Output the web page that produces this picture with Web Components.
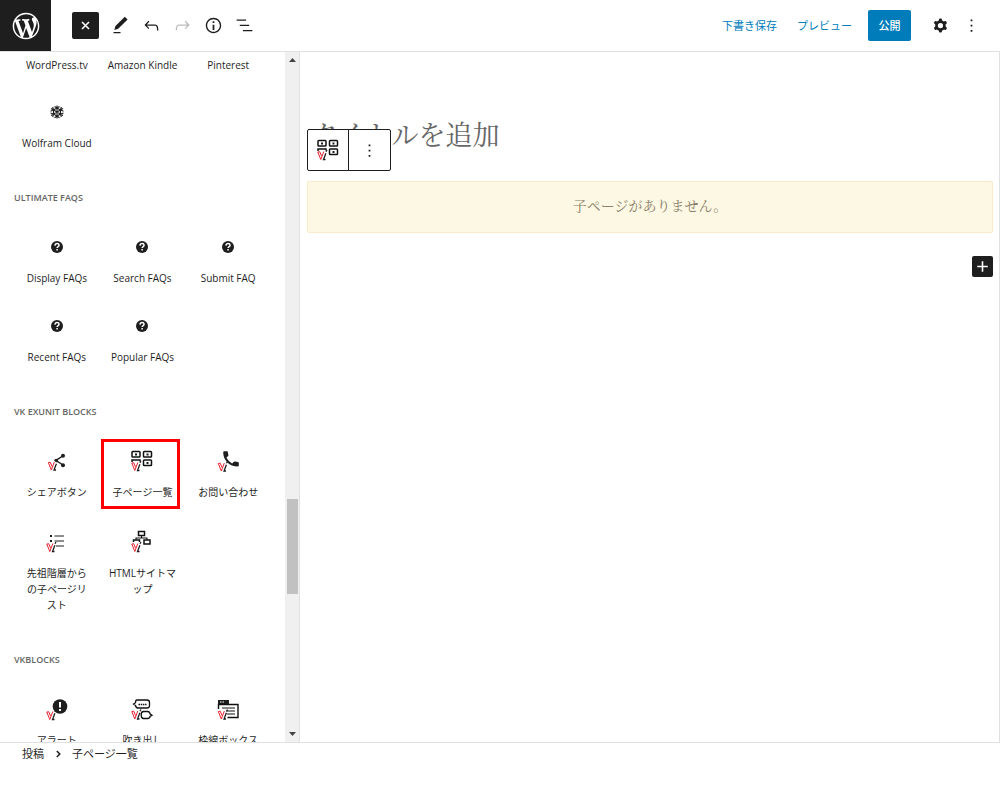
<!DOCTYPE html>
<html lang="ja">
<head>
<meta charset="utf-8">
<meta name="viewport" content="width=device-width, initial-scale=1">
<title>投稿の編集</title>
<style>
  body { margin: 0; background: #fff; color: #1e1e1e; font: 10px/16px "Open Sans", "Noto Sans CJK JP", sans-serif; }
</style>
</head>
<body>
<post-editor></post-editor>

<script>
const MARK = `<g fill="none" stroke-width="1"><path stroke="#e8202c" d="M.3 2L3.300 9.500L6.300 1.500M2.300 1.800L4 6M.3 2l2-.3"/><path stroke="#1e1e1e" stroke-width="1.300" d="M9.500 0L8.500 1.800M8.400 3.300L6 9.500h2"/></g>`;
const mark = (x, y) => `<g transform="translate(${x} ${y})">${MARK}</g>`;

const ICONS = {
  wordpress: ['-2 -2 24 24', `<path d="M20 10c0-5.51-4.49-10-10-10C4.48 0 0 4.49 0 10c0 5.52 4.48 10 10 10 5.51 0 10-4.48 10-10zM7.78 15.37L4.37 6.22c.55-.02 1.17-.08 1.17-.08.5-.06.44-1.13-.06-1.11 0 0-1.45.11-2.37.11-.18 0-.37 0-.58-.01C4.12 2.69 6.87 1.11 10 1.11c2.33 0 4.45.87 6.05 2.34-.68-.11-1.65.39-1.65 1.58 0 .74.45 1.36.9 2.1.35.61.55 1.36.55 2.46 0 1.49-1.4 5-1.4 5l-3.03-8.37c.54-.02.82-.17.82-.17.5-.05.44-1.25-.06-1.22 0 0-1.44.12-2.38.12-.87 0-2.33-.12-2.33-.12-.5-.03-.56 1.2-.06 1.22l.92.08 1.26 3.41zM17.41 10c.24-.64.74-1.87.43-4.25.7 1.29 1.05 2.71 1.05 4.25 0 3.29-1.73 6.24-4.4 7.78.97-2.59 1.94-5.2 2.92-7.78zM6.1 18.09C3.12 16.65 1.11 13.53 1.11 10c0-1.3.23-2.48.72-3.59C3.25 10.3 4.67 14.2 6.1 18.09zm4.03-6.63l2.58 6.98c-.86.29-1.76.45-2.71.45-.79 0-1.57-.11-2.29-.33.81-2.38 1.62-4.74 2.42-7.1z"/>`],
  close: ['0 0 24 24', `<path d="M8 8l8 8M16 8l-8 8" stroke="currentColor" stroke-width="1.8"/>`],
  plus: ['0 0 24 24', `<path d="M12 6v12M6 12h12" stroke="currentColor" stroke-width="1.8"/>`],
  edit: ['0 0 24 24', `<path d="M20.1 5.1L16.9 2 6.2 12.7l-1.3 4.4 4.5-1.3L20.1 5.1zM4 20.8h8v-1.5H4v1.5z"/>`],
  undo: ['0 0 24 24', `<path d="M18.3 11.7c-.6-.6-1.4-.9-2.3-.9H6.7l2.9-3.3-1.1-1-4.5 5L8.5 16l1-1-2.7-2.7H16c.5 0 .9.2 1.3.5 1 1 1 3.4 1 4.5v.3h1.5v-.2c0-1.5 0-4.3-1.5-5.7z"/>`],
  redo: ['0 0 24 24', `<path d="M15.6 6.5l-1.1 1 2.9 3.3H8c-.9 0-1.7.3-2.3.9-1.4 1.5-1.4 4.2-1.4 5.6v.2h1.5v-.3c0-1.1 0-3.5 1-4.5.3-.3.7-.5 1.3-.5h9.2L14.5 15l1.1 1.1 4.6-4.6-4.6-5z"/>`],
  info: ['0 0 24 24', `<path d="M12 3.2c-4.8 0-8.8 3.9-8.8 8.8 0 4.8 3.9 8.8 8.8 8.8 4.8 0 8.8-3.9 8.8-8.8 0-4.8-4-8.8-8.8-8.8zm0 16c-4 0-7.2-3.3-7.2-7.2C4.8 8 8 4.8 12 4.8s7.2 3.3 7.2 7.2c0 4-3.2 7.2-7.2 7.2zM11 17h2v-6h-2v6zm0-8h2V7h-2v2z"/>`],
  outline: ['0 0 24 24', `<path d="M13.8 5.2H3v1.5h10.8V5.2zm-3.6 12v1.5H21v-1.5H10.2zm7.2-6H6.6v1.5h10.8v-1.5z"/>`],
  gear: ['0 0 24 24', `<path fill-rule="evenodd" d="M10.289 4.836A1 1 0 0111.275 4h1.306a1 1 0 01.987.836l.244 1.466c.787.26 1.503.679 2.108 1.218l1.393-.522a1 1 0 011.216.437l.653 1.13a1 1 0 01-.23 1.273l-1.148.944a6.025 6.025 0 010 2.435l1.149.946a1 1 0 01.23 1.272l-.653 1.13a1 1 0 01-1.216.437l-1.394-.522c-.605.54-1.32.958-2.108 1.218l-.244 1.466a1 1 0 01-.987.836h-1.306a1 1 0 01-.986-.836l-.244-1.466a5.995 5.995 0 01-2.108-1.218l-1.394.522a1 1 0 01-1.217-.436l-.653-1.131a1 1 0 01.23-1.272l1.149-.946a6.026 6.026 0 010-2.435l-1.148-.944a1 1 0 01-.23-1.272l.653-1.131a1 1 0 011.217-.437l1.393.522a5.994 5.994 0 012.108-1.218l.244-1.466zM14.929 12a3 3 0 11-6 0 3 3 0 016 0z"/>`],
  more: ['0 0 24 24', `<path d="M11 5h2v2h-2zM11 11h2v2h-2zM11 17h2v2h-2z"/>`],
  chevron: ['0 0 24 24', `<path d="M10 7l5 5-5 5" fill="none" stroke="currentColor" stroke-width="2.600"/>`],
  wolfram: ['0 0 26 26', `<g fill="none" stroke="currentColor" stroke-width="1.1"><path d="M13 9l3.500 2v4L13 17l-3.500-2v-4z"/><path d="M13 6.500v13M7 9.500l12 7M7 16.500l12-7M10.500 7.500L13 9l2.500-1.500M17.300 8l-.8 3 3 1.200M19.500 14l-3 1 .8 3M15.500 18.800L13 17l-2.500 1.800M8.700 18l.8-3-3-1M6.500 12.200l3-1.200-.8-3"/></g>`],
  help: ['0 0 26 26', `<circle cx="13" cy="13" r="6"/><path d="M11 11.600q.2-2 2.100-2t2 1.700c0 1.300-1.900 1.300-2 2.700M13.100 15v1.500" fill="none" stroke="#fff" stroke-width="1.500"/>`],
  pages: ['0 0 26 26', `<g fill="none" stroke="#111" stroke-width="1.500"><rect x="3" y="3.500" width="8" height="5.500" rx=".8"/><rect x="14.500" y="3.500" width="8" height="5.500" rx=".8"/><rect x="14.500" y="12" width="8" height="5.500" rx=".8"/><path d="M3 14v-2h8v1.500"/></g><path d="M6 5.500h2v2H6zM17.500 5.500h2v2h-2zM17.500 14h2v2h-2z"/>${mark(2.5, 13)}`],
  share: ['0 0 26 26', `<path d="M19.500 7.500L12 12.300l7.500 5.200" fill="none" stroke="currentColor" stroke-width="1.400"/><circle cx="19" cy="7.700" r="2"/><circle cx="19" cy="17.300" r="2"/><circle cx="12" cy="12.300" r="1.600"/>${mark(4, 12.5)}`],
  phone: ['0 0 26 26', `<path d="M8.200 4.200q0-1 1-1h2.700q.9 0 1 1 .1 1.500.5 2.700.2.700-.3 1.200L11.400 9.800q2 3.700 5.700 5.700l1.800-1.700q.5-.5 1.200-.3 1.200.4 2.700.5 1 .1 1 1v2.600q0 1-1 1C14.500 18.600 8.200 12.300 8.200 4.200z"/>${mark(3, 13.5)}`],
  list: ['0 0 26 26', `<path d="M10.500 7h9.500M10.500 12h9.500M12 17h8" stroke="currentColor" stroke-width="1.200"/><path d="M6 6h2v2H6zM6 11h2v2H6z"/>${mark(2.5, 13)}`],
  sitemap: ['0 0 26 26', `<g fill="none" stroke="#111" stroke-width="1.500"><rect x="9.500" y="2.500" width="6" height="4"/><rect x="15" y="11" width="6" height="4"/><path d="M4.500 13v-2h6v2"/><path stroke-width="1.100" d="M12.500 7v2M7 11V9h11v2"/></g>${mark(2.5, 13)}`],
  alert: ['0 0 26 26', `<circle cx="16" cy="10.500" r="7.300"/><path d="M16 6v5.500M16 13v2" stroke="#fff" stroke-width="2"/>${mark(2.5, 14)}`],
  balloon: ['0 0 26 26', `<g fill="none" stroke="#111" stroke-width="1.300"><path d="M8 4h10q2.500 0 2.500 2.500v3q0 2.500-2.500 2.500H9q-2 0-2.500-2.500L4.500 8l2-1.300Q6.500 4 8 4z"/><path d="M14.500 15.500h4q2.300 0 2.500 2.300l2 1.400-2 1.300q-.2 2-2.500 2h-4q-2.300 0-2.300-3.500t2.300-3.500z"/><path d="M9.500 8.500h8" stroke-dasharray="1.500 .7"/></g>${mark(2.5, 13.5)}`],
  frame: ['0 0 26 26', `<path d="M3 4h11v4.500H3z"/><path d="M5 6h1.500M7.500 6H9" stroke="#fff"/><g fill="none" stroke="#111"><path stroke-width="1.400" d="M3.500 13V8.500H23v13H12.500"/><path d="M7 12h13M11 15h9M12 18h8"/></g>${mark(3, 13.5)}`],
};

function define(name, html, setup) {
  const template = document.createElement('template');
  template.innerHTML = html;
  customElements.define(name, class extends HTMLElement {
    connectedCallback() {
      if (this.shadowRoot) return;
      this.attachShadow({ mode: 'open' }).append(template.content.cloneNode(true));
      if (setup) setup(this, this.shadowRoot);
    }
  });
}

function makeIcon(name) {
  const icon = document.createElement('ui-icon');
  icon.setAttribute('name', name);
  return icon;
}

define('ui-icon', `
<style>
  :host { display: block; flex: none; width: var(--icon-size, 21px); height: var(--icon-size, 21px); }
  svg { display: block; width: 100%; height: 100%; fill: currentColor; }
</style>
<svg aria-hidden="true"></svg>`, (host, root) => {
  const [box, shapes] = ICONS[host.getAttribute('name')];
  const svg = root.querySelector('svg');
  svg.setAttribute('viewBox', box);
  svg.innerHTML = shapes;
});

define('tool-button', `
<style>
  :host { display: block; flex: none; width: 31px; height: 31px; }
  button { display: flex; align-items: center; justify-content: center; width: 100%; height: 100%; padding: 0; border: 0; border-radius: 2px; background: none; color: #1e1e1e; }
  :host([dark]) { width: 27px; height: 27px; }
  :host([dark]) button { background: #1e1e1e; color: #fff; }
  :host([small]) { width: 21px; height: 21px; }
  button:disabled { color: #bbb; }
</style>
<button type="button"></button>`, (host, root) => {
  const button = root.querySelector('button');
  button.append(makeIcon(host.getAttribute('icon')));
  button.setAttribute('aria-label', host.getAttribute('label'));
  button.disabled = host.hasAttribute('disabled');
});

define('editor-header', `
<style>
  :host { display: flex; align-items: center; height: 51px; border-bottom: 1px solid #e0e0e0; font-size: 11px; }
  .logo { display: flex; align-items: center; justify-content: center; width: 51px; height: 51px; background: #1e1e1e; color: #fff; --icon-size: 32px; }
  .tools { display: flex; align-items: center; margin-left: 21px; }
  .tools tool-button[dark] { margin-right: 6px; }
  .actions { display: flex; align-items: center; margin-left: auto; padding-right: 13px; }
  button { padding: 0; border: 0; background: none; color: #007cba; font: inherit; }
  .text { margin-right: 20px; }
  .preview { margin-right: 16px; }
  .publish { min-width: 43px; height: 31px; margin-right: 14px; border-radius: 2px; background: #007cba; color: #fff; font-weight: 500; }
</style>
<a class="logo" href="#" aria-label="投稿一覧"><ui-icon name="wordpress"></ui-icon></a>
<div class="tools">
  <tool-button dark icon="close" label="ブロック挿入を閉じる"></tool-button>
  <tool-button icon="edit" label="ツール"></tool-button>
  <tool-button icon="undo" label="元に戻す"></tool-button>
  <tool-button icon="redo" label="やり直す" disabled></tool-button>
  <tool-button icon="info" label="詳細"></tool-button>
  <tool-button icon="outline" label="リスト表示"></tool-button>
</div>
<div class="actions">
  <button type="button" class="text">下書き保存</button>
  <button type="button" class="preview">プレビュー</button>
  <button type="button" class="publish">公開</button>
  <tool-button icon="gear" label="設定"></tool-button>
  <tool-button icon="more" label="オプション"></tool-button>
</div>`);

define('block-item', `
<style>
  :host { display: block; position: relative; }
  button { display: flex; flex-direction: column; align-items: center; gap: 10px; width: 100%; padding: 13px 8px 14px; border: 0; background: none; color: #1e1e1e; font: inherit; text-align: center; --icon-size: 26px; }
  span { max-width: 100%; }
  :host([nowrap]) span { max-width: none; white-space: nowrap; }
  :host([partial]) button { padding-top: 5px; padding-bottom: 13px; }
  :host([highlighted])::after { content: ""; position: absolute; box-sizing: border-box; top: 4px; left: 1px; width: 79px; height: 70px; border: 3px solid #f00; }
</style>
<button type="button"><span><slot></slot></span></button>`, (host, root) => {
  const name = host.getAttribute('icon');
  if (name) root.querySelector('button').prepend(makeIcon(name));
});

define('block-group', `
<style>
  :host { display: block; padding: 0 14px; }
  h2 { margin: 0; padding: 25px 0 15px; color: #666; font: inherit; font-size: 9px; font-weight: 600; text-transform: uppercase; }
  .grid { display: grid; grid-template-columns: repeat(3, minmax(0, 1fr)); }
  :host([loose]) .grid { row-gap: 2px; }
</style>
<div class="grid"><slot></slot></div>`, (host, root) => {
  if (!host.hasAttribute('heading')) return;
  const h2 = document.createElement('h2');
  h2.textContent = host.getAttribute('heading');
  root.querySelector('.grid').before(h2);
});

define('scroll-rail', `
<style>
  :host { display: flex; flex-direction: column; align-items: center; flex: none; width: 14px; box-sizing: border-box; padding: 6px 0; background: #f0f0f0; }
  svg { display: block; width: 7px; height: 4px; fill: #444; }
  .track { flex: 1; display: grid; grid-template-rows: 436fr 95fr 138fr; width: 11px; }
  .thumb { grid-row: 2; background: #c1c1c1; }
</style>
<svg viewBox="0 0 7 4"><path d="M0 4L3.500 0 7 4z"/></svg>
<div class="track"><div class="thumb"></div></div>
<svg viewBox="0 0 7 4"><path d="M0 0L3.500 4 7 0z"/></svg>`);

define('block-library', `
<style>
  :host { display: flex; flex: none; width: 299px; border-right: 1px solid #e0e0e0; overflow: hidden; }
  .list { flex: 1; min-width: 0; overflow: hidden; }
</style>
<div class="list">
  <block-group>
    <block-item partial>WordPress.tv</block-item>
    <block-item partial>Amazon Kindle</block-item>
    <block-item partial>Pinterest</block-item>
    <block-item icon="wolfram" nowrap>Wolfram Cloud</block-item>
  </block-group>
  <block-group heading="Ultimate FAQs">
    <block-item icon="help">Display FAQs</block-item>
    <block-item icon="help">Search FAQs</block-item>
    <block-item icon="help">Submit FAQ</block-item>
    <block-item icon="help">Recent FAQs</block-item>
    <block-item icon="help">Popular FAQs</block-item>
  </block-group>
  <block-group heading="VK ExUnit Blocks" loose>
    <block-item icon="share">シェアボタン</block-item>
    <block-item icon="pages" highlighted>子ページ一覧</block-item>
    <block-item icon="phone">お問い合わせ</block-item>
    <block-item icon="list">先祖階層からの子ページリスト</block-item>
    <block-item icon="sitemap">HTMLサイトマップ</block-item>
  </block-group>
  <block-group heading="VKBlocks" loose>
    <block-item icon="alert">アラート</block-item>
    <block-item icon="balloon">吹き出し</block-item>
    <block-item icon="frame">枠線ボックス</block-item>
  </block-group>
</div>
<scroll-rail></scroll-rail>`);

define('block-toolbar', `
<style>
  :host { display: flex; box-sizing: border-box; height: 42px; border: 1px solid #1e1e1e; border-radius: 2px; background: #fff; }
  button { display: flex; align-items: center; justify-content: center; width: 41px; padding: 0; border: 0; background: none; color: #1e1e1e; }
  .type { --icon-size: 26px; border-right: 1px solid #1e1e1e; }
</style>
<button type="button" class="type" aria-label="ブロックタイプを変更"><ui-icon name="pages"></ui-icon></button>
<button type="button" aria-label="オプション"><ui-icon name="more"></ui-icon></button>`);

define('post-canvas', `
<style>
  :host { display: flex; flex-direction: column; flex: 1; min-width: 0; box-sizing: border-box; padding: 61px 6px 0 7px; border-right: 1px solid #e0e0e0; font-family: "Noto Serif CJK JP", "Noto Serif JP", "Noto Sans CJK JP", serif; }
  input { box-sizing: border-box; width: 100%; height: 40px; padding: 0 4px; border: 0; outline: 0; background: none; font: inherit; font-size: 27px; font-weight: 400; }
  input::placeholder { color: #666; opacity: 1; }
  .block { position: relative; margin-top: 28px; }
  block-toolbar { position: absolute; left: 0; bottom: 62px; }
  .notice { margin: 0; padding: 13px 15px 17px; border: 1px solid #faebcc; border-radius: 2px; background: #fcf8e3; color: #8a7d68; font-size: 14px; font-weight: 400; line-height: 20px; text-align: center; }
  tool-button { align-self: flex-end; margin-top: 23px; }
</style>
<input type="text" placeholder="タイトルを追加" aria-label="タイトルを追加">
<div class="block">
  <p class="notice">子ページがありません。</p>
  <block-toolbar></block-toolbar>
</div>
<tool-button dark small icon="plus" label="ブロックを追加"></tool-button>`);

define('editor-breadcrumb', `
<style>
  :host { display: block; box-sizing: border-box; height: 49px; padding: 3px 22px; border-top: 1px solid #e0e0e0; font-size: 11px; }
  nav { display: flex; align-items: center; gap: 7px; --icon-size: 14px; }
  a { color: inherit; text-decoration: none; }
</style>
<nav aria-label="パンくずリスト"><a href="#">投稿</a><ui-icon name="chevron"></ui-icon><a href="#" aria-current="true">子ページ一覧</a></nav>`);

define('post-editor', `
<style>
  :host { display: flex; flex-direction: column; height: 100vh; }
  main { display: flex; flex: 1; min-height: 0; }
</style>
<editor-header></editor-header>
<main><block-library></block-library><post-canvas></post-canvas></main>
<editor-breadcrumb></editor-breadcrumb>`);
</script>
</body>
</html>
